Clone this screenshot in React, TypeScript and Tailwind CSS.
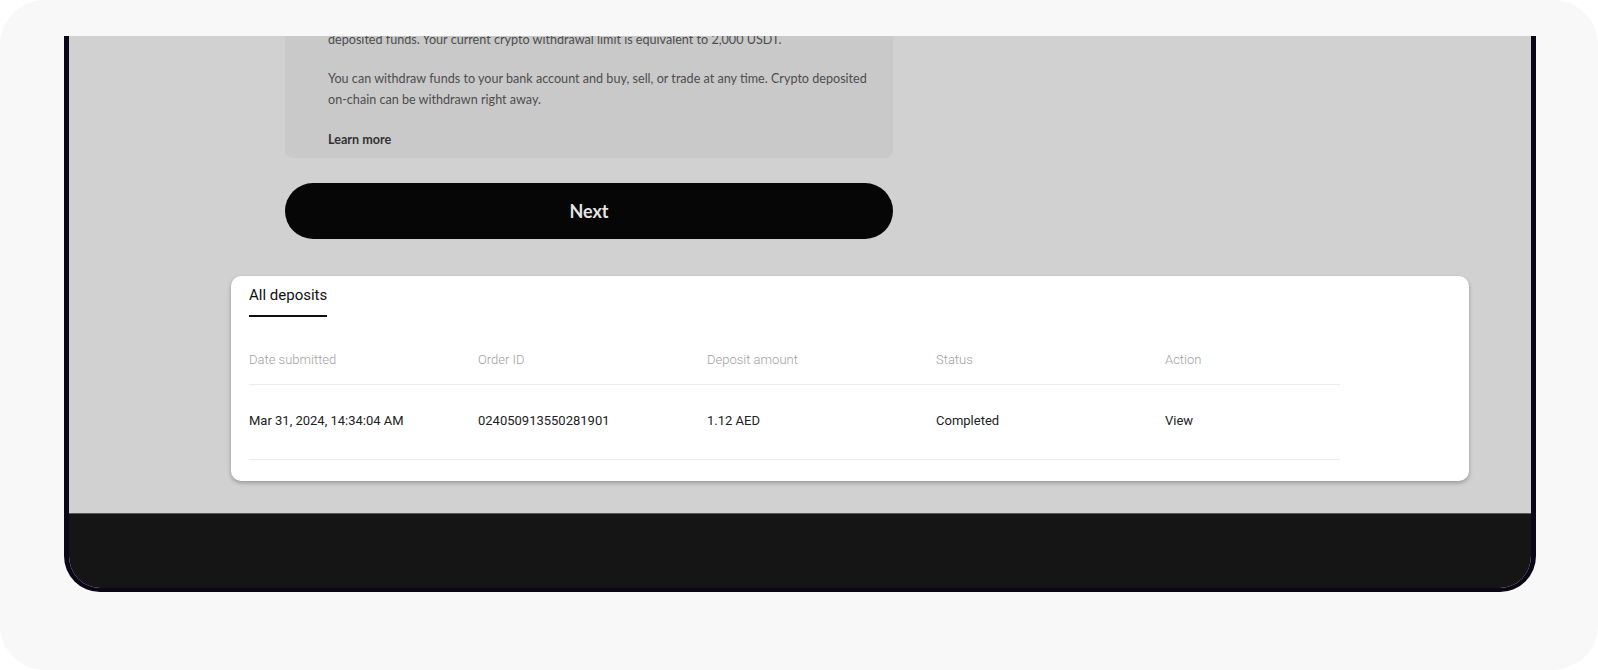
export default function App() {
  const cols = ['Date submitted', 'Order ID', 'Deposit amount', 'Status', 'Action'];
  const row = ['Mar 31, 2024, 14:34:04 AM', '024050913550281901', '1.12 AED', 'Completed', 'View'];

  return (
    <div className="w-[1598px] h-[670px] bg-white">
      <div className="w-full h-full rounded-[45px] bg-[#f8f8f8] pt-[36px] pl-[64px]">
        <div className="w-[1472px] h-[556px] border-x-[5px] border-b-[4px] border-[#0b0618] rounded-b-[36px] overflow-hidden flex flex-col">
          <div className="h-[477px] bg-[#d1d1d1] flex flex-col">
            <div className="-mt-[36px] ml-[216px] w-[608px]">
              <div className="bg-[#c9c9c9] rounded-b-[8px] pl-[43px] pr-[10px] pt-[8px] pb-[8px] text-[12.6px] leading-[21px] text-[#4d4d4d] font-['Lato',sans-serif]">
                <p>Your account is subject to a temporary limit on crypto withdrawals for recently</p>
                <p>deposited funds. Your current crypto withdrawal limit is equivalent to 2,000 USDT.</p>
                <p className="mt-[18px]">
                  You can withdraw funds to your bank account and buy, sell, or trade at any time. Crypto deposited on-chain can be withdrawn right away.
                </p>
                <p className="mt-[19px] font-bold text-[#333]">Learn more</p>
              </div>
              <button className="mt-[25px] w-full h-[56px] rounded-full bg-[#060606] text-[#e4e4e4] text-[18px] font-bold font-['Lato',sans-serif]">
                Next
              </button>
            </div>

            <div className="mt-[37px] ml-[162px] w-[1238px] h-[205px] bg-white rounded-[10px] shadow-[0_2px_4px_rgba(0,0,0,0.28)] px-[18px] pt-[7px] font-['Roboto',sans-serif]">
              <div className="inline-flex flex-col">
                <span className="text-[15px] leading-[20px] text-[#111]">All deposits</span>
                <span className="mt-[10px] h-[2px] bg-[#111]" />
              </div>
              <div className="w-[1091px]">
                <div className="grid grid-cols-[229px_229px_229px_229px_175px] pt-[34px] pb-[15px] border-b border-[#ececec] text-[13px] leading-[18px] text-[#9f9f9f] font-light">
                  {cols.map((c) => (
                    <span key={c}>{c}</span>
                  ))}
                </div>
                <div className="grid grid-cols-[229px_229px_229px_229px_175px] pt-[27px] pb-[29px] border-b border-[#ececec] text-[13px] leading-[18px] text-[#222]">
                  {row.map((c) => (
                    <span key={c}>{c}</span>
                  ))}
                </div>
              </div>
            </div>
          </div>
          <div className="flex-1 bg-[#151515] border-t border-[#5a5a5a]" />
        </div>
      </div>
    </div>
  );
}
